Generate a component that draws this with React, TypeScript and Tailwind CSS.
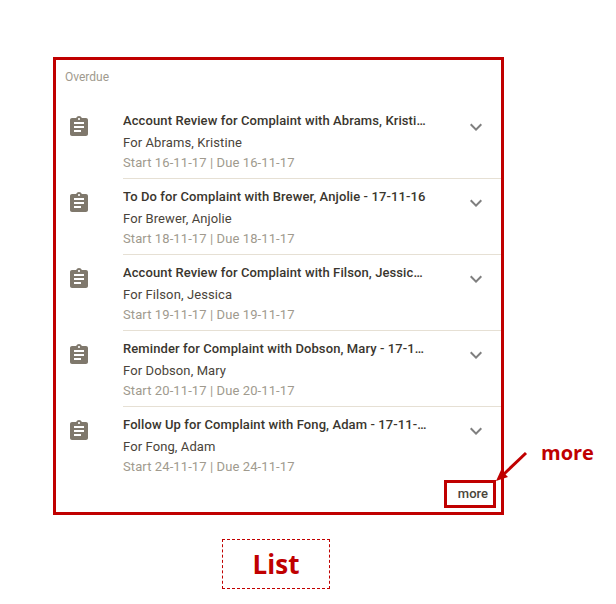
const rows = [
  { title: 'Account Review for Complaint with Abrams, Kristine - 17-11-16', who: 'For Abrams, Kristine', dates: 'Start 16-11-17 | Due 16-11-17' },
  { title: 'To Do for Complaint with Brewer, Anjolie - 17-11-16', who: 'For Brewer, Anjolie', dates: 'Start 18-11-17 | Due 18-11-17' },
  { title: 'Account Review for Complaint with Filson, Jessica - 17-11-16', who: 'For Filson, Jessica', dates: 'Start 19-11-17 | Due 19-11-17' },
  { title: 'Reminder for Complaint with Dobson, Mary - 17-11-16', who: 'For Dobson, Mary', dates: 'Start 20-11-17 | Due 20-11-17' },
  { title: 'Follow Up for Complaint with Fong, Adam - 17-11-16', who: 'For Fong, Adam', dates: 'Start 24-11-17 | Due 24-11-17' },
]

function ClipboardIcon() {
  return (
    <svg width="24" height="24" viewBox="0 0 24 24" fill="#7f786c">
      <path d="M19 3h-4.18C14.4 1.84 13.3 1 12 1s-2.4.84-2.82 2H5c-1.1 0-2 .9-2 2v14c0 1.1.9 2 2 2h14c1.1 0 2-.9 2-2V5c0-1.1-.9-2-2-2zm-7 0c.55 0 1 .45 1 1s-.45 1-1 1-1-.45-1-1 .45-1 1-1zm2 14H7v-2h7v2zm3-4H7v-2h10v2zm0-4H7V7h10v2z" />
    </svg>
  )
}

function Chevron() {
  return (
    <svg width="24" height="24" viewBox="0 0 24 24" fill="#7f7f7f">
      <path d="M16.59 8.59 12 13.17 7.41 8.59 6 10l6 6 6-6z" />
    </svg>
  )
}

function Row({ title, who, dates, last }: { title: string; who: string; dates: string; last: boolean }) {
  return (
    <div className="flex h-[76px]">
      <div className="w-[67px] shrink-0 pl-[11px] pt-[12px]">
        <ClipboardIcon />
      </div>
      <div className={`flex min-w-0 flex-1 ${last ? '' : 'border-b border-[#e6e0d4]'}`}>
        <div className="w-[306px] min-w-0 pt-[9px] tracking-[0.1px]">
          <div className="truncate text-[13px] font-medium leading-[18px] text-[#3a362e]">{title}</div>
          <div className="mt-[4px] text-[13px] leading-[18px] text-[#4a443a]">{who}</div>
          <div className="mt-[2px] text-[13px] leading-[18px] text-[#a09a8e]">{dates}</div>
        </div>
        <div className="pl-[35px] pt-[12px]">
          <Chevron />
        </div>
      </div>
    </div>
  )
}

export default function App() {
  return (
    <div className="relative h-[604px] w-[616px] bg-white pl-[53px] pt-[57px] font-['Roboto',sans-serif]">
      <div className="relative h-[458px] w-[451px] border-[3px] border-[#c00000]">
        <div className="pl-[9px] pt-[10px] text-[12px] leading-[14px] text-[#a09a8e]">Overdue</div>
        <div className="mt-[19px]">
          {rows.map((row, index) => (
            <Row key={index} {...row} last={index === rows.length - 1} />
          ))}
        </div>
        <div className="absolute bottom-[4px] right-[5px] flex h-[28px] w-[52px] items-center justify-end border-[3px] border-[#c00000] pr-[5px] text-[13px] font-medium text-[#4a443a]">
          more
        </div>
      </div>

      {/* callout */}
      <svg className="absolute left-[490px] top-[445px]" width="40" height="42" viewBox="0 0 40 42" fill="none">
        <path d="M36 8 14 29" stroke="#c00000" strokeWidth="3" />
        <path d="M6 36 11 25 18 32z" fill="#c00000" />
      </svg>
      <div className="absolute left-[541px] top-[439px] font-['Open_Sans',sans-serif] text-[20px] font-bold leading-[28px] text-[#c00000]">
        more
      </div>

      <div className="ml-[169px] mt-[24px] flex h-[50px] w-[108px] items-center justify-center border border-dashed border-[#c00000] font-['Open_Sans',sans-serif] text-[26px] font-bold text-[#c00000]">
        List
      </div>
    </div>
  )
}
